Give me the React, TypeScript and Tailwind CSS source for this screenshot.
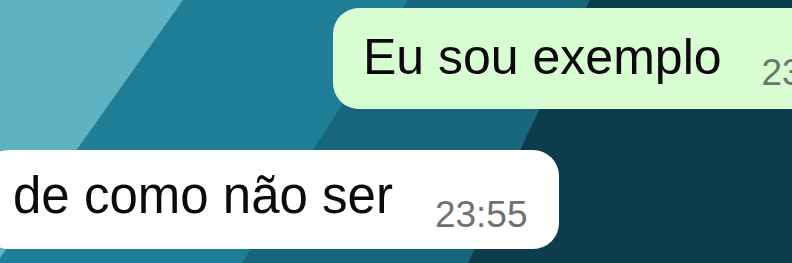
export default function App() {
  return (
    <div className="relative w-[792px] h-[263px] overflow-hidden bg-[#0d3d4c] font-['Liberation_Sans',Arial,sans-serif]">
      {/* wallpaper */}
      <svg
        className="absolute inset-0"
        width="792"
        height="263"
        viewBox="0 0 792 263"
        aria-hidden="true"
      >
        <polygon points="0,0 590,0 468,263 0,263" fill="#17667b" />
        <polygon points="0,0 408,0 242,263 0,263" fill="#1f7e95" />
        <polygon points="0,0 183,0 0,258" fill="#5eb2c1" />
      </svg>

      <div className="relative flex flex-col items-start">
        {/* outgoing */}
        <div className="ml-[333px] mt-[8px] h-[101px] w-[520px] shrink-0 flex items-start rounded-[26px] bg-[#d9fdd3] pl-[30px]">
          <span className="mt-[24px] text-[50px] leading-none text-[#0b0b0b] whitespace-nowrap">
            Eu sou exemplo
          </span>
          <span className="ml-[40px] mt-[46px] text-[37px] leading-none text-[#68776a] whitespace-nowrap">
            23:55
          </span>
        </div>

        {/* incoming */}
        <div className="-ml-[17px] mt-[41px] h-[99px] w-[576px] shrink-0 flex items-start rounded-[26px] bg-white pl-[30px]">
          <span className="mt-[20px] text-[51px] leading-none text-[#0b0b0b] whitespace-nowrap">
            de como não ser
          </span>
          <span className="ml-[42px] mt-[46px] text-[37px] leading-none text-[#707070] whitespace-nowrap">
            23:55
          </span>
        </div>
      </div>
    </div>
  )
}
